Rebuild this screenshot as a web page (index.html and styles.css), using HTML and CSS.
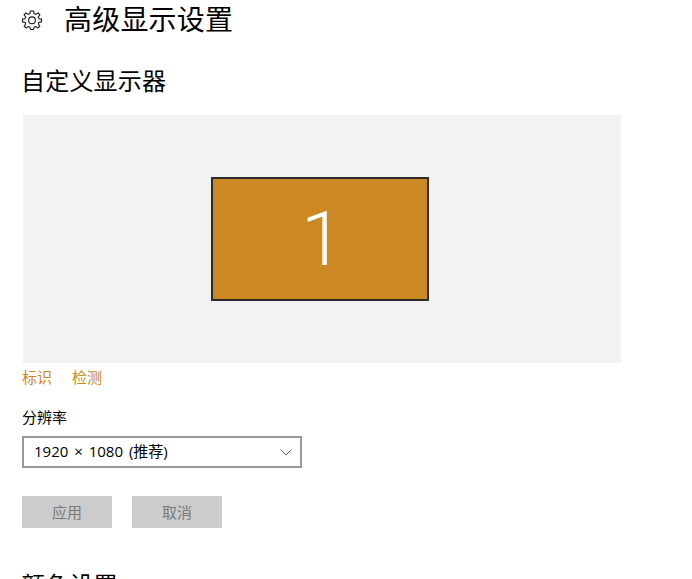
FILE: index.html
```html
<!DOCTYPE html>
<html>

<head>
    <meta charset="utf-8" />
    <title>高级显示设置</title>
    <link rel="stylesheet" href="styles.css">
</head>

<body>
    <div class="page">
        <div class="header">
            <svg class="gear" viewBox="0 0 20 20" width="20" height="20">
                <path d="M8.4 1 H11.6 L12.1 3.6 L13.9 4.4 L16.1 2.9 L17.9 4.9 L16.3 7 L17 8.7 L19.5 9.1 V11.9 L17 12.3 L16.3 14 L17.8 16.1 L15.8 18 L13.8 16.5 L12 17.2 L11.6 19.5 H8.4 L8 17.2 L6.2 16.5 L4.2 18 L2.2 16.1 L3.7 14 L3 12.3 L0.5 11.9 V9.1 L3 8.7 L3.7 7 L2.1 4.9 L3.9 2.9 L6.1 4.4 L7.9 3.6 Z" />
                <circle cx="10" cy="10.3" r="3.4" />
            </svg>
            <h1 class="title">高级显示设置</h1>
        </div>

        <h2 class="section-title">自定义显示器</h2>

        <div class="display-panel">
            <div class="monitor">1</div>
        </div>

        <div class="links">
            <a class="link">标识</a>
            <a class="link">检测</a>
        </div>

        <div class="field-label">分辨率</div>
        <div class="select">
            <span class="select-value">1920 × 1080 (推荐)</span>
            <svg class="chevron" viewBox="0 0 12 7" width="12" height="7">
                <path d="M0.5 0.5 L6 6 L11.5 0.5" />
            </svg>
        </div>

        <div class="buttons">
            <div class="button">应用</div>
            <div class="button">取消</div>
        </div>

        <h2 class="section-title next">颜色设置</h2>
    </div>
</body>

</html>
```

FILE: styles.css
```css
/* layout */

html, body {
    margin: 0;
    height: 100%;
    overflow: hidden;
    background-color: #fff;
}

.page {
    height: 579px;
    overflow: hidden;
    padding-left: 22px;
    color: #000;
    font-family: "Open Sans", "Noto Sans CJK SC", sans-serif;
    font-size: 15px;
}

/* header */

.header {
    display: flex;
    align-items: center;
    height: 40px;
}

.gear {
    margin-right: 23px;
    fill: none;
    stroke: #1a1a1a;
    stroke-width: 1.1;
}

.title {
    margin: 0 0 2px -1px;
    font-size: 28px;
    font-weight: 400;
    letter-spacing: 0.2px;
    line-height: 38px;
}

.section-title {
    margin: 24px 0 0 -1px;
    font-size: 24px;
    font-weight: 400;
    letter-spacing: 0.2px;
    line-height: 34px;
}

.next {
    margin-top: 40px;
}

/* display preview */

.display-panel {
    display: flex;
    align-items: center;
    justify-content: center;
    box-sizing: border-box;
    width: 598px;
    height: 248px;
    margin: 17px 0 0 1px;
    padding-right: 4px;
    background-color: #f2f2f2;
}

.monitor {
    box-sizing: border-box;
    width: 218px;
    height: 124px;
    padding-left: 4px;
    border: 2px solid #2b2b2b;
    background-color: #cc8822;
    color: #fff;
    font-family: "Roboto", sans-serif;
    font-size: 76px;
    font-weight: 300;
    line-height: 120px;
    text-align: center;
}

/* controls */

.links {
    display: flex;
    gap: 20px;
    margin-top: 4px;
    line-height: 20px;
}

.link {
    color: #cc8822;
}

.field-label {
    margin-top: 20px;
    line-height: 20px;
}

.select {
    display: flex;
    align-items: center;
    justify-content: space-between;
    box-sizing: border-box;
    width: 280px;
    height: 32px;
    margin-top: 9px;
    padding: 0 8px 4px 10px;
    border: 2px solid #999;
}

.select-value {
    word-spacing: 2px;
}

.chevron {
    margin-top: 4px;
    fill: none;
    stroke: #666;
    stroke-width: 1;
}

.buttons {
    display: flex;
    gap: 20px;
    margin-top: 28px;
}

.button {
    width: 90px;
    height: 32px;
    background-color: #ccc;
    color: #7a7a7a;
    line-height: 33px;
    text-align: center;
}
```
